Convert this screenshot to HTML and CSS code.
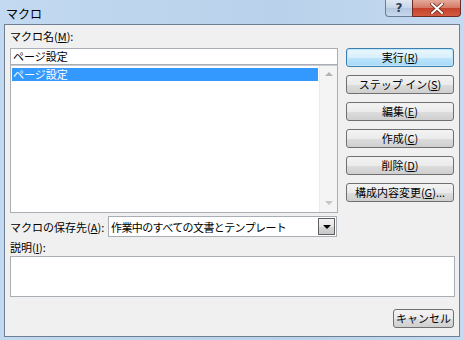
FILE: index.html
```html
<!DOCTYPE html>
<html lang="ja">
<head>
  <meta charset="UTF-8" />
  <title>マクロ</title>
  <link rel="stylesheet" href="styles.css">
</head>
<body>
  <div class="window">
    <div class="titlebar">
      <span class="title">マクロ</span>
      <div class="caption-btns">
        <span class="cap-btn help-btn">?</span>
        <span class="cap-btn close-btn">
          <svg width="14" height="11" viewBox="0 0 14 11">
            <path d="M2 1 L12 10 M12 1 L2 10" stroke="#6a2a20" stroke-width="3.6" stroke-linecap="square" />
            <path d="M2 1 L12 10 M12 1 L2 10" stroke="#ffffff" stroke-width="2" stroke-linecap="square" />
          </svg>
        </span>
      </div>
    </div>

    <div class="client">
      <div class="top">
        <div class="left-col">
          <div class="lbl name-lbl">マクロ名(<u>M</u>):</div>
          <div class="name-input">ページ設定</div>
          <div class="listbox">
            <div class="items">
              <div class="item selected">ページ設定</div>
            </div>
            <div class="vscroll">
              <span class="arrow up"></span>
              <span class="arrow down"></span>
            </div>
          </div>
        </div>

        <div class="buttons">
          <button class="btn default-btn">実行(<u>R</u>)</button>
          <button class="btn">ステップ イン(<u>S</u>)</button>
          <button class="btn">編集(<u>E</u>)</button>
          <button class="btn">作成(<u>C</u>)</button>
          <button class="btn">削除(<u>D</u>)</button>
          <button class="btn">構成内容変更(<u>G</u>)...</button>
        </div>
      </div>

      <div class="store-row">
        <span class="lbl store-lbl">マクロの保存先(<u>A</u>):</span>
        <div class="combo">
          <span class="combo-text">作業中のすべての文書とテンプレート</span>
          <span class="drop-btn"><span class="drop-arrow"></span></span>
        </div>
      </div>

      <div class="lbl desc-lbl">説明(<u>I</u>):</div>
      <div class="desc"></div>

      <div class="footer">
        <button class="btn cancel-btn">キャンセル</button>
      </div>
    </div>
  </div>
</body>
</html>
```

FILE: styles.css
```css
body {
  margin: 0;
  font-family: "Noto Sans CJK JP", "Liberation Sans", sans-serif;
  font-size: 11px;
  color: #000;
  background-color: #b9d1ea;
}

.window {
  width: 464px;
  height: 340px;
  display: flex;
  flex-direction: column;
  background: linear-gradient(to right, #c2d9f1, #b9d1ea 60%, #c4daf2);
}

/* title bar */

.titlebar {
  height: 24px;
  display: flex;
  align-items: flex-start;
  padding: 0 3px 0 6px;
}

.title {
  font-size: 12px;
  line-height: 14px;
  margin-top: 7px;
}

.caption-btns {
  margin-left: auto;
  display: flex;
}

.cap-btn {
  height: 16px;
  display: flex;
  align-items: center;
  justify-content: center;
  border: 1px solid #6b7d94;
  border-top: none;
}

.help-btn {
  width: 26px;
  border-right: none;
  border-radius: 0 0 0 4px;
  background: linear-gradient(#dfe8f3, #c6d5e7 50%, #b4c7de 51%, #c7d8ec);
  color: #2c3e57;
  font-family: "DejaVu Sans", sans-serif;
  font-size: 12px;
  font-weight: bold;
  line-height: 16px;
}

.close-btn {
  width: 47px;
  border-color: #6e2d24;
  border-radius: 0 0 4px 0;
  background: linear-gradient(#e3a99a, #d67763 50%, #c5412b 51%, #d35b40);
}

/* client area */

.client {
  flex: 1;
  margin: 0 4px 3px 4px;
  border: 1px solid #6f7f92;
  background-color: #f0f0f0;
  padding: 4px 4px 0 5px;
  display: flex;
  flex-direction: column;
}

.lbl {
  line-height: 14px;
  white-space: nowrap;
}

u {
  text-underline-offset: 1px;
}

.top {
  display: flex;
  gap: 8px;
}

.left-col {
  width: 328px;
  display: flex;
  flex-direction: column;
}

.name-lbl {
  margin-bottom: 5px;
}

.name-input {
  height: 17px;
  box-sizing: border-box;
  border: 1px solid #a9adb4;
  background: #fff;
  line-height: 15px;
  padding-left: 2px;
}

.listbox {
  height: 148px;
  box-sizing: border-box;
  border: 1px solid #a9adb4;
  border-top-color: #c9ccd1;
  background: #fff;
  display: flex;
}

.items {
  flex: 1;
  padding: 2px 1px 0 1px;
}

.item {
  height: 13px;
  line-height: 13px;
  padding-left: 1px;
}

.item.selected {
  background-color: #3399ff;
  color: #fff;
}

.vscroll {
  width: 17px;
  background-color: #f4f4f4;
  border-left: 1px solid #ebebeb;
  display: flex;
  flex-direction: column;
  justify-content: space-between;
  align-items: center;
  padding: 6px 0 7px 0;
}

.arrow {
  width: 0;
  height: 0;
  border-left: 4px solid transparent;
  border-right: 4px solid transparent;
}

.arrow.up {
  border-bottom: 4px solid #b4b4b4;
}

.arrow.down {
  border-top: 4px solid #c4c4c4;
}

/* command buttons */

.buttons {
  width: 108px;
  margin-top: 19px;
  display: flex;
  flex-direction: column;
  gap: 8px;
}

.btn {
  height: 19px;
  box-sizing: border-box;
  border: 1px solid #707070;
  border-radius: 3px;
  background: linear-gradient(#f3f3f3, #ebebeb 50%, #dddddd 51%, #cfcfcf);
  font-family: inherit;
  font-size: 11px;
  line-height: 15px;
  color: #000;
  padding: 0;
  white-space: nowrap;
}

.default-btn {
  border-color: #3c7fb1;
  box-shadow: inset 0 0 0 1px #bfe7fb;
  background: linear-gradient(#eaf6fd, #d9f0fc 50%, #bee6fd 51%, #a7d9f5);
}

/* storage row */

.store-row {
  display: flex;
  align-items: center;
  margin-top: 3px;
  height: 21px;
}

.store-lbl {
  width: 98px;
}

.combo {
  width: 229px;
  height: 21px;
  box-sizing: border-box;
  border: 1px solid #a9adb4;
  background: #fff;
  display: flex;
  align-items: center;
  padding: 0 1px 0 2px;
}

.combo-text {
  flex: 1;
  letter-spacing: -0.6px;
}

.drop-btn {
  width: 17px;
  height: 17px;
  box-sizing: border-box;
  border: 1px solid #5e5e5e;
  background: linear-gradient(#f2f2f2, #e6e6e6 50%, #d6d6d6 51%, #c8c8c8);
  display: flex;
  align-items: center;
  justify-content: center;
}

.drop-arrow {
  width: 0;
  height: 0;
  border-left: 4px solid transparent;
  border-right: 4px solid transparent;
  border-top: 4px solid #000;
}

/* description */

.desc-lbl {
  margin-top: 3px;
}

.desc {
  height: 41px;
  box-sizing: border-box;
  margin-top: 2px;
  border: 1px solid #a9adb4;
  background: #fff;
}

.footer {
  display: flex;
  justify-content: flex-end;
  margin-top: 12px;
  padding-right: 1px;
}

.cancel-btn {
  width: 61px;
}
```
